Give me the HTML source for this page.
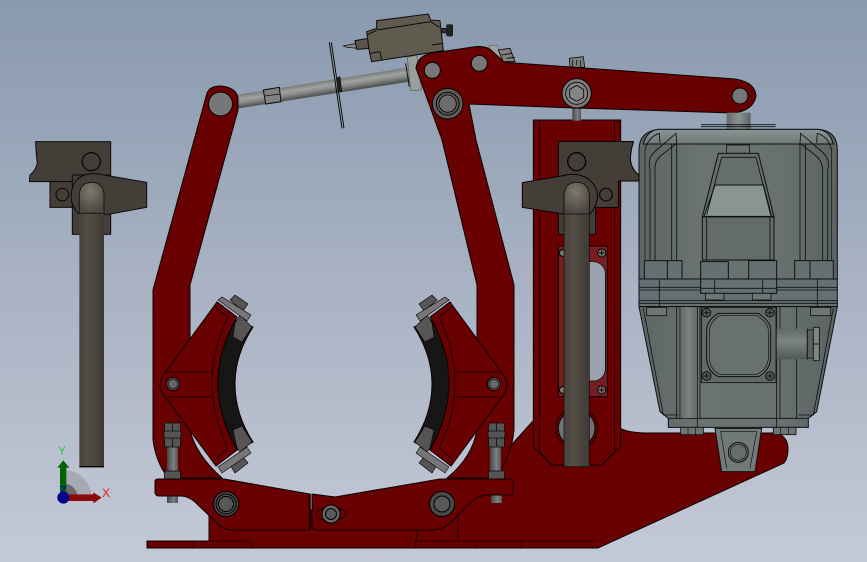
<!DOCTYPE html>
<html><head><meta charset="utf-8"><title>Brake assembly</title>
<style>html,body{margin:0;padding:0;width:867px;height:562px;overflow:hidden;background:#a5afc0}svg{display:block}</style></head>
<body>
<svg width="867" height="562" viewBox="0 0 867 562" xmlns="http://www.w3.org/2000/svg">
<defs>
<linearGradient id="bg" x1="0" y1="0" x2="0" y2="1"><stop offset="0" stop-color="#8999ae"/><stop offset=".5" stop-color="#a8b2c3"/><stop offset="1" stop-color="#c4c9d7"/></linearGradient>
<linearGradient id="rod" x1="0" y1="0" x2="1" y2="0"><stop offset="0" stop-color="#47423b"/><stop offset=".35" stop-color="#544e46"/><stop offset=".7" stop-color="#49443d"/><stop offset="1" stop-color="#3e3a33"/></linearGradient>
<linearGradient id="bar" gradientUnits="userSpaceOnUse" x1="370" y1="213" x2="376.500" y2="253.500"><stop offset="0" stop-color="#787a78"/><stop offset=".35" stop-color="#a0a29f"/><stop offset=".6" stop-color="#8a8c89"/><stop offset="1" stop-color="#4e504e"/></linearGradient>
<linearGradient id="thr" x1="0" y1="0" x2="1" y2="0"><stop offset="0" stop-color="#444647"/><stop offset=".6" stop-color="#7d8082"/><stop offset="1" stop-color="#505253"/></linearGradient>
<linearGradient id="body" x1="0" y1="0" x2="1" y2="0"><stop offset="0" stop-color="#5d6564"/><stop offset=".3" stop-color="#6b7372"/><stop offset=".7" stop-color="#687170"/><stop offset="1" stop-color="#5b6362"/></linearGradient>
<linearGradient id="cap" x1="0" y1="0" x2="0" y2="1"><stop offset="0" stop-color="#8b9593"/><stop offset="1" stop-color="#6f7877"/></linearGradient>
<linearGradient id="stem" x1="0" y1="0" x2="1" y2="0"><stop offset="0" stop-color="#626a69"/><stop offset=".5" stop-color="#8a9391"/><stop offset="1" stop-color="#5d6564"/></linearGradient>
<linearGradient id="stem2" x1="0" y1="0" x2="1" y2="0"><stop offset="0" stop-color="#626a69"/><stop offset=".5" stop-color="#788280"/><stop offset="1" stop-color="#636b6a"/></linearGradient>
<linearGradient id="cond" x1="0" y1="0" x2="0" y2="1"><stop offset="0" stop-color="#626a69"/><stop offset=".4" stop-color="#7b8482"/><stop offset="1" stop-color="#525a59"/></linearGradient>
<linearGradient id="slot" x1="0" y1="0" x2="1" y2="0"><stop offset="0" stop-color="#7e8489"/><stop offset=".3" stop-color="#9aa1ac"/><stop offset="1" stop-color="#9aa2b0"/></linearGradient>
<radialGradient id="dome" cx=".45" cy=".3" r=".7"><stop offset="0" stop-color="#7f7970"/><stop offset="1" stop-color="#4b463f"/></radialGradient>
<g id="shoe" stroke="#0c0000">
 <path d="M165,373 L217,302 L237,317 Q218,350 218,383 Q218,416 237,450 L216,466 L165,397 Q160,391 160,385 Q160,379 165,373Z" fill="#690000"/>
 <path d="M214,306 L228,317 Q212,350 212,383 Q212,416 228,448 L214,460 M165,372 H212 M165,397 H212" fill="none" stroke-width=".8"/>
 <path d="M236,320 L253,327 Q235,355 235,384 Q235,414 253,442 L237,450 Q218,416 218,383 Q218,350 236,320Z" fill="#161616"/>
 <path d="M235,323 L240,315 L252,327 L242,342 L233,337Z M233,430 L242,426 L252,442 L240,452 L237,448Z" fill="#555" stroke-width=".6"/>
 <path d="M230,300 L235,295 L248,304 L243,311Z M230,465 L243,457 L248,463 L235,473Z" fill="#555" stroke-width=".6"/>
 <path d="M218,300 L222,297 L251,315 L247,321Z M218,467 L247,447 L251,453 L222,473Z" fill="#777" stroke-width=".6"/>
 <circle cx="173" cy="384" r="6.500" fill="#555"/><circle cx="173" cy="384" r="4.500" fill="#686868" stroke-width=".6"/>
</g>
</defs>
<rect width="867" height="562" fill="url(#bg)"/>

<!-- Base -->
<path d="M147,541 H209 V510 H458 V513 L514,442 L533,421 H620 V428 Q628,433 650,433 H777 Q788,437 788,449 Q788,458 784,463 L598,548 H147Z" fill="#690000" stroke="#0c0000"/>
<path d="M458,513 V541 M147,541 H250 Q253,545 253,548 M415,548 Q415,545 418,530 M415,541 H597 M193,541 V548 M475,541 V548 M521,541 V548" fill="none" stroke="#140000" stroke-width=".8"/>

<!-- Column -->
<g transform="translate(500,110) scale(.33333)" stroke="#0c0000">
 <path d="M100,30 H362 V1010 L305,1065 H155 L100,1010Z" fill="#690000" stroke-width="3"/>
 <path d="M119,30 V1025 L155,1065 M344,30 V1025 L305,1065" fill="none" stroke-width="2.500"/>
 <path d="M175,408 H322 V860 H175Z" fill="#751f22" stroke-width="3"/>
 <rect x="230" y="455" width="86" height="358" rx="36" fill="url(#slot)" stroke="#0c0000" stroke-width="2"/>
 <g fill="#777" stroke-width="3"><circle cx="305" cy="429" r="12"/><circle cx="305" cy="840" r="12"/><circle cx="188" cy="429" r="10"/><circle cx="188" cy="840" r="10"/></g>
 <path d="M297,429 H313 M305,421 V437 M297,840 H313 M305,832 V848" stroke="#000" stroke-width="3"/>
 <circle cx="230" cy="955" r="63" fill="#690000" stroke-width="3"/>
 <circle cx="230" cy="955" r="55" fill="#6d7378" stroke-width="3"/>
 <path d="M175,95 H400 Q391,125 391,150 Q395,180 417,195 V213 H355 V292 H287 V373 H175Z" fill="#443e38" stroke-width="3"/>
 <circle cx="230" cy="155" r="27" fill="none" stroke-width="4"/><circle cx="318" cy="254" r="19" fill="none" stroke-width="3.500"/>
 <path d="M67,218 L190,197 Q230,185 265,207 Q295,230 292,265 Q285,300 268,312 H190 L67,292Z" fill="#443e38" stroke-width="3"/>
 <rect x="192" y="250" width="76" height="820" fill="url(#rod)" stroke="#0c0c0c" stroke-width="2"/>
 <path d="M192,312 V255 Q195,217 230,217 Q265,217 268,255 V312Z" fill="url(#dome)" stroke="#111" stroke-width="2.500"/>
</g>

<!-- Top link rod, disc, switch, small parts behind lever -->
<g transform="translate(200,10) scale(.33333)" stroke="#0c0c0c">
 <path d="M110,255 L625,172 L628,215 L115,295Z" fill="url(#bar)" stroke="none"/>
 <path d="M190,240 L238,232 L243,275 L197,282Z" fill="#808280" stroke-width="3"/>
 <path d="M195,258 L240,252" stroke-width="2"/>
 <path d="M388,97 L426,355 M394,97 L432,355" stroke-width="3" fill="none"/>
 <path d="M410,205 L420,200 L425,245 L414,245Z" fill="#222" stroke-width="2"/>
 <path d="M622,142 L650,135 L665,240 L632,242Z" fill="#9a9e9c" stroke="#555" stroke-width="2"/>
 <path d="M617,160 L628,230" stroke-width="3" fill="none"/>
 <path d="M866,108 L892,105 L905,150 L880,150Z" fill="#a0a3a0" stroke="#666" stroke-width="2"/>
 <path d="M430,108 L470,100 L472,115 L440,112Z" fill="#888" stroke-width="2"/>
 <path d="M465,92 L505,85 L515,115 L470,118Z" fill="#5a564c" stroke-width="3"/>
 <path d="M530,32 L685,12 L692,30 L720,32 L730,122 L515,155 L508,125 L500,65 L530,55Z" fill="#5f5b4f" stroke-width="3"/>
 <path d="M530,60 L692,35 M692,35 L718,52 M510,130 L540,125 L545,150 M695,105 L730,100 M500,75 L528,62" fill="none" stroke-width="3"/>
 <rect x="726" y="55" width="22" height="14" fill="#333" stroke-width="2"/><rect x="740" y="44" width="18" height="34" rx="4" fill="#222" stroke-width="2"/>
 <rect x="1117" y="290" width="26" height="42" fill="url(#thr)" stroke="none"/>
 <path d="M1108,145 L1150,140 L1154,172 L1110,172Z" fill="#7c7e7b" stroke-width="2.500"/>
 <path d="M1118,150 V170 M1130,150 V165 M1142,150 V170" fill="none" stroke-width="2.500"/>
</g>

<!-- Left arm -->
<path d="M207,93 Q210,86 220,86 Q236,87 238,98 V110 L190,285 V430 Q196,455 222,478 H168 Q156,462 153,440 V290Z" fill="#690000" stroke="#0c0000"/>

<!-- Right arm + top lever (single outline) -->
<path d="M416,68 Q418,55 433,53 L473,47 Q487,45 493,52 L502,60 Q507,63 515,63 L735,79 Q755,82 756,96 Q753,111 733,113 L575,108 L469,104 L476,140 L514,285 V430 Q512,455 495,478 H447 Q472,458 477,430 V285 L442,140Z" fill="#690000" stroke="#0c0000"/>
<g transform="translate(200,10) scale(.33333)" stroke="#0c0000">
 <path d="M895,120 L930,115 L945,155 L910,155Z" fill="#7e807b" stroke-width="2.500"/>
 <path d="M905,135 L935,130 M920,145 L945,142" fill="none" stroke-width="2.500"/>
 <circle cx="697" cy="181" r="24" fill="#767878" stroke-width="3"/>
 <circle cx="838" cy="160" r="24" fill="#767878" stroke-width="3"/>
 <circle cx="743" cy="281" r="46" fill="#5c5c5c" stroke-width="3"/><circle cx="743" cy="281" r="34" fill="#5c5c5c" stroke-width="3"/><circle cx="743" cy="281" r="26" fill="#6c6c6c" stroke-width="2.500"/>
 <circle cx="1130" cy="250" r="44" fill="#7a7c7c" stroke-width="3"/><circle cx="1130" cy="250" r="33" fill="#828484" stroke-width="2.500"/>
 <path d="M1130,226 L1151,238 V262 L1130,274 L1109,262 V238Z" fill="#838585" stroke-width="2.500"/>
 <circle cx="1620" cy="258" r="24" fill="#767878" stroke-width="3"/>
</g>
<circle cx="220.500" cy="104" r="12" fill="#767878" stroke="#0c0000"/>

<!-- Shoes -->
<use href="#shoe"/>
<use href="#shoe" transform="translate(667,0) scale(-1,1)"/>

<!-- Threaded bolts -->
<g stroke="#0c0c0c">
 <rect x="167" y="447" width="11" height="34" fill="url(#thr)" stroke="none"/><rect x="167" y="495" width="11" height="8" fill="url(#thr)" stroke="none"/>
 <rect x="490" y="447" width="11" height="34" fill="url(#thr)" stroke="none"/><rect x="491" y="495" width="11" height="8" fill="url(#thr)" stroke="none"/>
 <g fill="#555" stroke-width=".8">
  <rect x="164.500" y="423" width="16" height="24" rx="1"/><rect x="164" y="431" width="17" height="7" rx="2"/><path d="M172.500,423 V431 M172.500,438 V447" fill="none"/><rect x="164.500" y="471" width="16" height="8"/>
  <rect x="488.500" y="423" width="16" height="24" rx="1"/><rect x="488" y="431" width="17" height="7" rx="2"/><path d="M496.500,423 V431 M496.500,438 V447" fill="none"/><rect x="488.500" y="471" width="16" height="8"/>
 </g>
</g>

<!-- Lower lever pair -->
<path d="M158,479 H224 L310,494 V530 H232 Q224,530 218,524 L198,505 Q190,496 180,496 H158 Q155,495 155,492 V482 Q155,479 158,479Z" fill="#690000" stroke="#0c0000"/>
<path d="M312,494 L335,497 L440,479 H510 Q513,479 513,482 V492 Q513,495 510,495 H485 Q476,497 470,503 L450,523 Q442,530 432,530 H316 Q312,530 312,526Z" fill="#690000" stroke="#0c0000"/>
<path d="M310,494 V530" stroke="#000" stroke-width="1.500"/>
<g stroke="#000"><circle cx="226" cy="504" r="12.500" fill="#4a4a4a"/><circle cx="226" cy="504" r="10" fill="#4a4a4a"/><circle cx="226" cy="504" r="7.500" fill="#585858"/>
<circle cx="442" cy="504" r="12.500" fill="#4a4a4a"/><circle cx="442" cy="504" r="8" fill="#585858"/>
<ellipse cx="331" cy="514" rx="15" ry="6.500" fill="none" stroke-width=".8"/><circle cx="331" cy="514" r="9" fill="#666"/><circle cx="331" cy="514" r="5.500" fill="#5a5a5a"/></g>

<!-- Motor -->
<g transform="translate(600,100) scale(.33333)" stroke="#0d1010">
 <rect x="380" y="38" width="72" height="52" fill="url(#stem)" stroke="none"/>
 <path d="M303,74 H527 M303,80 H527" stroke-width="2.500"/>
 <path d="M175,88 H655 Q712,92 712,150 V537 H117 V150 Q117,95 175,88Z" fill="url(#body)" stroke-width="3"/>
 <path d="M175,88 H655 Q690,92 700,132 H130 Q140,92 175,88Z" fill="url(#cap)" stroke-width="3"/>
 <path d="M117,537 H712 V620 H117Z" fill="#677070" stroke-width="3"/>
 <path d="M117,562 H712 M117,570 H712 M117,602 H712 M117,610 H712 M178,537 V620 M652,537 V620" fill="none" stroke-width="2.500"/>
 <path d="M117,620 H712 L650,935 L625,955 V982 H205 V955 L180,935Z" fill="url(#body)" stroke-width="3"/>
 <path d="M130,625 L190,945 H235 M700,625 L640,945 H595 M205,955 H625 M230,620 V955 M240,620 V955 M292,620 V982 M300,620 V955 M530,620 V982 M540,620 V955 M590,620 V955" fill="none" stroke-width="2.500"/>
 <rect x="241" y="622" width="50" height="332" fill="url(#stem2)" stroke="none"/>
 <!-- upper detail -->
 <path d="M150,205 V480 M165,205 V480 M215,132 V480 M230,132 V480 M600,132 V480 M616,132 V480 M668,205 V480 M683,205 V480" fill="none" stroke-width="2.500"/>
 <path d="M148,205 V185 Q150,165 170,150 L228,100 L230,130 L185,165 Q165,180 165,205 M135,150 Q145,110 178,100 L180,128 M685,205 V185 Q680,165 660,150 L602,100 L600,130 L645,165 Q665,180 668,205 M695,150 Q685,110 652,100 L650,128" fill="none" stroke-width="2.500"/>
 <path d="M135,150 V480 M695,150 V480" fill="none" stroke-width="2"/>
 <rect x="380" y="135" width="68" height="25" fill="#6a7372" stroke-width="2.500"/>
 <path d="M355,160 H475 L522,350 H307Z" fill="#656e6d" stroke-width="3"/>
 <path d="M345,255 H490 L515,350 H312Z" fill="#8a9492" stroke-width="3"/>
 <path d="M365,172 H468 L512,345 M365,172 L320,345" fill="none" stroke-width="2.500"/>
 <path d="M307,350 H522 V480 H307Z" fill="#636c6b" stroke-width="3"/><path d="M320,350 V480 M510,350 V480" stroke-width="2.500"/>
 <path d="M307,350 H522" stroke-width="4.500"/>
 <g fill="#677070" stroke-width="3">
  <rect x="133" y="482" width="113" height="55"/><path d="M202,482 V537"/>
  <rect x="584" y="482" width="116" height="55"/><path d="M630,482 V537"/>
  <path d="M302,537 V485 H385 V537Z"/><path d="M446,537 V485 Q446,482 452,482 H530 V537Z"/>
  <rect x="302" y="537" width="228" height="43"/>
 </g>
 <path d="M344,537 V580 M488,537 V580 M302,565 H530" stroke-width="2.500"/>
 <g fill="#6d7675" stroke-width="2.500"><rect x="316" y="580" width="56" height="20"/><rect x="457" y="580" width="56" height="20"/><rect x="140" y="622" width="60" height="25"/><rect x="632" y="622" width="60" height="25"/></g>
 <!-- junction box -->
 <rect x="304" y="622" width="224" height="226" fill="#616a69" stroke-width="2.500"/>
 <path d="M355,640 H475 Q512,665 512,690 V780 Q505,815 475,830 H355 Q325,815 320,780 V690 Q322,660 355,640Z" fill="#68716f" stroke-width="3"/>
 <path d="M360,646 H470 Q505,668 505,692 V778 Q500,810 470,823 H360 Q332,810 328,778 V692 Q330,665 360,646Z" fill="none" stroke-width="2"/>
 <g fill="#555" stroke-width="3"><circle cx="319" cy="638" r="13"/><circle cx="510" cy="638" r="13"/><circle cx="320" cy="828" r="13"/><circle cx="510" cy="828" r="13"/></g>
 <path d="M311,638 H327 M319,630 V646 M502,638 H518 M510,630 V646 M312,828 H328 M320,820 V836 M502,828 H518 M510,820 V836" stroke-width="2.500"/>
 <rect x="530" y="686" width="92" height="92" fill="url(#cond)" stroke="none"/>
 <path d="M622,686 V778" stroke-width="3"/>
 <rect x="622" y="690" width="18" height="84" fill="#5a6261" stroke-width="2.500"/>
 <rect x="640" y="682" width="18" height="100" fill="#7d8684" stroke-width="2.500"/><path d="M640,732 H658" stroke-width="2.500"/>
 <g fill="#6d7675" stroke-width="2.500"><rect x="242" y="982" width="68" height="22"/><rect x="520" y="982" width="68" height="22"/></g>
 <path d="M264,982 V1004 M286,982 V1004 M542,982 V1004 M566,982 V1004" stroke-width="2"/>
 <path d="M345,985 H485 L465,1115 H365Z" fill="#717a79" stroke-width="3"/>
 <path d="M362,995 L380,1105 M470,995 L450,1105 M360,995 H470" fill="none" stroke-width="2"/>
 <circle cx="415" cy="1057" r="30" fill="#666e6d" stroke-width="3"/><circle cx="415" cy="1057" r="24" fill="#666e6d" stroke-width="2"/>
</g>

<!-- Right head overlapping motor edge -->
<g transform="translate(500,110) scale(.33333)" stroke="#0c0000">
 <path d="M355,95 H400 Q391,125 391,150 Q395,180 417,195 V213 H355Z" fill="#443e38" stroke-width="3"/>
 <path d="M355,96 V212" stroke="#443e38" stroke-width="5"/>
</g>

<!-- Left cylinder -->
<g transform="translate(20,130) scale(.33333)" stroke="#0c0c0c">
 <path d="M47,35 H272 V135 H200 L157,155 H28 L30,135 Q45,125 52,100 Q48,70 47,35Z" fill="#443e38" stroke-width="3"/>
 <path d="M90,155 H160 V232 H90Z" fill="#443e38" stroke-width="3"/>
 <circle cx="214" cy="95" r="27" fill="none" stroke-width="4"/><circle cx="127" cy="194" r="19" fill="none" stroke-width="3.500"/>
 <rect x="157" y="135" width="115" height="178" fill="#443e38" stroke-width="3"/>
 <path d="M380,157 L240,133 Q195,125 170,150 Q148,180 155,215 Q165,245 180,253 H265 L380,232Z" fill="#443e38" stroke-width="3"/>
 <rect x="178" y="240" width="74" height="770" fill="url(#rod)" stroke="none"/>
 <path d="M178,1010 H252" stroke="#000" stroke-width="4"/>
 <path d="M178,250 V195 Q180,157 215,157 Q250,157 252,195 V250Z" fill="url(#dome)" stroke="#111" stroke-width="2.500"/>
</g>

<!-- Triad -->
<g transform="translate(40,435) scale(.33333)">
 <path d="M70,188 V105 A85,85 0 0 1 155,188Z" fill="#a6a9af"/>
 <path d="M70,188 V145 A43,43 0 0 1 113,188Z" fill="#696b71"/>
 <path d="M60,180 V98 H52 L70,76 L88,98 H79 V180Z" fill="#006300"/>
 <path d="M85,178 H160 V172 L185,188 L160,205 V198 H85Z" fill="#8a0a0a"/>
 <circle cx="70" cy="188" r="18" fill="#00008c"/>
 <path d="M60,155 H76 L60,180 H78" fill="none" stroke="#0000b0" stroke-width="3"/>
</g>
<text x="58" y="455" font-family="Liberation Sans, sans-serif" font-size="12" fill="#27c93f">Y</text>
<text x="102" y="497" font-family="Liberation Sans, sans-serif" font-size="12" fill="#e81e28">X</text>
</svg>
</body></html>
